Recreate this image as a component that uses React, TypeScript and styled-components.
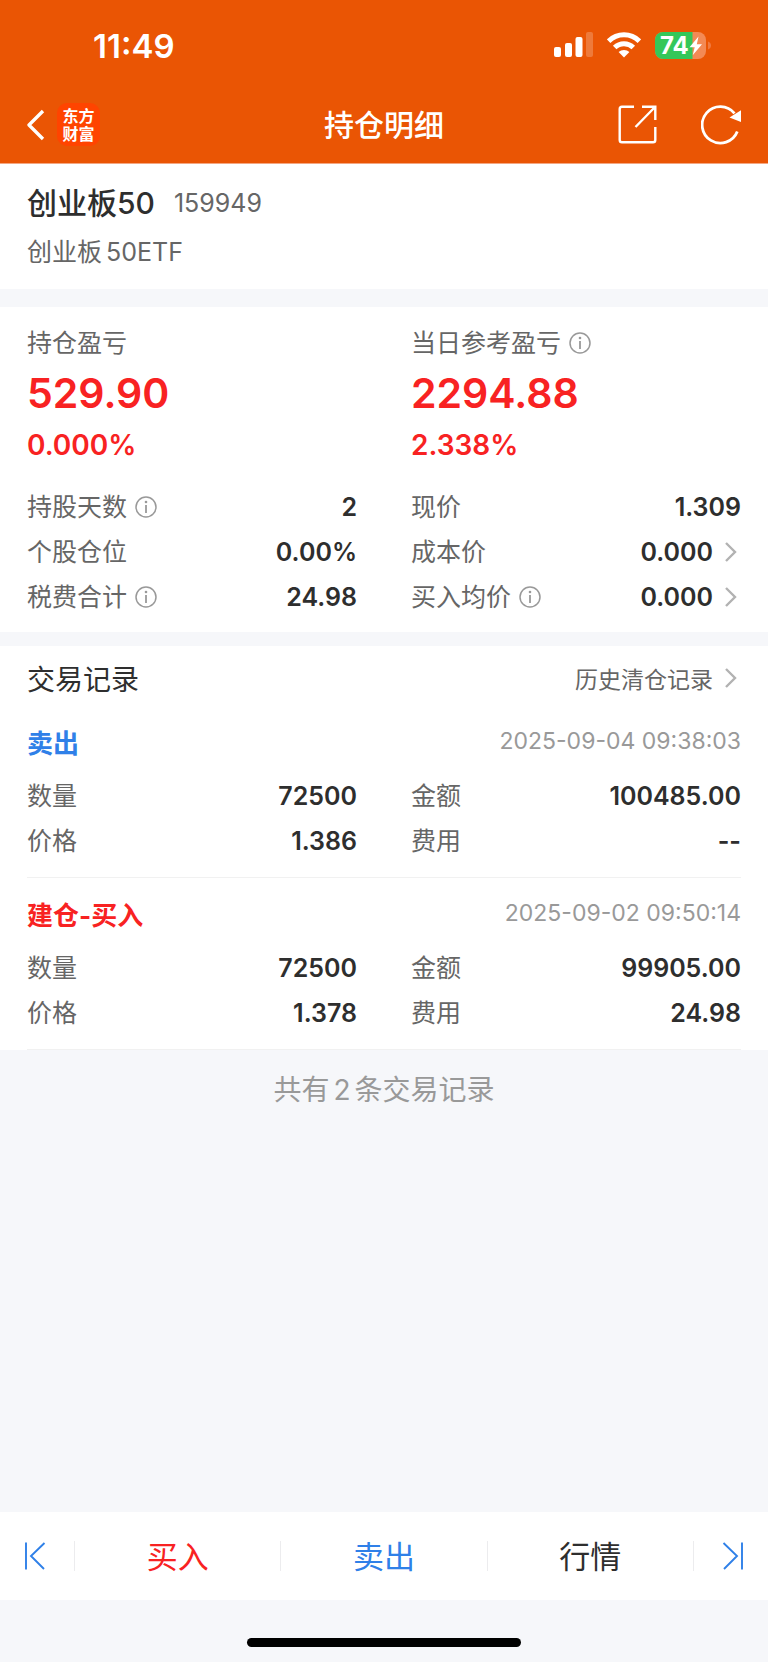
import React from "react";
import styled, { createGlobalStyle } from "styled-components";

const red = "#f82222";
const blue = "#2f80e8";
const ink = "#2e2e2e";
const muted = "#666666";
const faint = "#999999";
const canvas = "#f6f7fa";

const GlobalStyle = createGlobalStyle`
  * { box-sizing: border-box; }
  body {
    margin: 0;
    background: ${canvas};
    color: ${ink};
    font-family: Inter, "Noto Sans CJK SC", sans-serif;
    font-size: 25px;
  }
  button {
    font: inherit;
    color: inherit;
    background: none;
    border: 0;
    padding: 0;
    cursor: pointer;
  }
  h1, h2, h3, p, dl, dt, dd { margin: 0; font-weight: 400; }
  svg { display: block; flex: none; }
`;

const Page = styled.div`
  min-height: 100vh;
  display: flex;
  flex-direction: column;
`;

const Header = styled.header`
  background: #ea5504;
  color: #fff;
  border-bottom: 1px solid #f4a782;
`;

const StatusBar = styled.div`
  height: 88px;
  padding: 4px 57px 0 93px;
  display: flex;
  align-items: center;
  justify-content: space-between;
`;

const Clock = styled.span`
  font-size: 33px;
  font-weight: 600;
`;

const StatusIcons = styled.div`
  display: flex;
  align-items: center;
  gap: 14px;
  padding-bottom: 2px;
`;

const NavBar = styled.nav`
  height: 75px;
  padding: 0 27px 2px;
  display: grid;
  grid-template-columns: 1fr auto 1fr;
  align-items: center;
`;

const NavGroup = styled.div<{ $end?: boolean }>`
  display: flex;
  align-items: center;
  justify-content: ${(p) => (p.$end ? "flex-end" : "flex-start")};
  gap: ${(p) => (p.$end ? "44px" : "12px")};
`;

const Logo = styled.span`
  width: 43px;
  height: 43px;
  border-radius: 10px;
  background: #ff4400;
  display: grid;
  place-content: center;
  font-size: 16px;
  font-weight: 700;
  line-height: 18px;
  text-align: center;
`;

const NavTitle = styled.h1`
  font-size: 30px;
  line-height: 44px;
  && { font-weight: 500; }
`;

const Panel = styled.section<{ $pad: string }>`
  background: #fff;
  padding: ${(p) => p.$pad};
`;

const Divider = styled.div<{ $size: number }>`
  height: ${(p) => p.$size}px;
`;

const NameRow = styled.div`
  display: flex;
  align-items: center;
  gap: 19px;
  line-height: 44px;
`;

const StockName = styled.h2`
  font-size: 30px;
  && { font-weight: 500; }
`;

const StockCode = styled.span`
  color: ${muted};
`;

const FullName = styled.p`
  color: ${muted};
  line-height: 54px;
`;

const Columns = styled.div`
  display: grid;
  grid-template-columns: 1fr 1fr;
  column-gap: 54px;
`;

const Label = styled.span`
  color: ${muted};
  display: flex;
  align-items: center;
  gap: 8px;
  line-height: 36px;
`;

const Profit = styled.p`
  color: ${red};
  font-size: 41px;
  line-height: 64px;
  && { font-weight: 600; }
`;

const Percent = styled.p`
  color: ${red};
  font-size: 28px;
  line-height: 40px;
  margin-bottom: 19px;
  && { font-weight: 600; }
`;

const Facts = styled.dl`
  display: grid;
  grid-template-columns: 1fr 1fr;
  column-gap: 54px;
`;

const Fact = styled.div`
  height: 45px;
  display: flex;
  align-items: center;
  justify-content: space-between;
`;

const Value = styled.dd`
  && { font-weight: 600; }
`;

const ValueButton = styled.button`
  display: flex;
  align-items: center;
`;

const RecordsHead = styled.div`
  height: 54px;
  padding-bottom: 2px;
  display: flex;
  align-items: center;
  justify-content: space-between;
`;

const RecordsTitle = styled.h2`
  font-size: 28px;
`;

const HistoryLink = styled.a`
  display: flex;
  align-items: center;
  color: ${muted};
  font-size: 23px;
  text-decoration: none;
`;

const Record = styled.article`
  padding: 6px 0 14px;
  border-bottom: 1px solid #f1f1f1;
`;

const RecordHead = styled.div`
  height: 61px;
  padding-bottom: 3px;
  display: flex;
  align-items: center;
  justify-content: space-between;
`;

const Side = styled.h3<{ $color: string }>`
  color: ${(p) => p.$color};
  font-size: 26px;
  && { font-weight: 700; }
`;

const Stamp = styled.time`
  color: ${faint};
  font-size: 23px;
`;

const Summary = styled.p`
  flex: 1;
  padding-top: 15px;
  color: ${faint};
  font-size: 28px;
  line-height: 50px;
  text-align: center;
`;

const Latin = styled.span<{ $after?: boolean }>`
  margin: 0 ${(p) => (p.$after ? "4px" : "0")} 0 4px;
`;

const ActionBar = styled.nav`
  height: 88px;
  background: #fff;
  display: flex;
  align-items: center;
`;

const Step = styled.button<{ $last?: boolean }>`
  width: 74px;
  height: 88px;
  padding: ${(p) => (p.$last ? "0 0 0 4px" : "0 4px 0 0")};
  display: grid;
  place-items: center;
`;

const Action = styled.button<{ $color: string }>`
  flex: 1;
  height: 88px;
  padding-bottom: 4px;
  color: ${(p) => p.$color};
  font-size: 31px;
`;

const Rule = styled.span`
  width: 1px;
  height: 30px;
  background: #ececee;
`;

const HomeArea = styled.div`
  height: 62px;
  padding-bottom: 15px;
  display: flex;
  align-items: flex-end;
  justify-content: center;
`;

const HomeIndicator = styled.div`
  width: 274px;
  height: 9px;
  border-radius: 5px;
  background: #000;
`;

const BatteryBox = styled.div`
  position: relative;
  width: 56px;
  height: 27px;
`;

const BatteryText = styled.span`
  position: absolute;
  left: 5px;
  top: 0;
  font-size: 24px;
  font-weight: 700;
  line-height: 27px;
`;

const SignalIcon = () => (
  <svg width="39" height="26" viewBox="0 0 39 26" fill="#fff">
    <rect x="0" y="15" width="7" height="10" rx="2" />
    <rect x="11" y="11" width="7" height="14" rx="2" />
    <rect x="21.500" y="5" width="7" height="20" rx="2" />
    <rect x="32" y="0" width="7" height="25" rx="2" opacity="0.22" />
  </svg>
);

const WifiIcon = () => (
  <svg width="34" height="26" viewBox="0 0 34 26">
    <g fill="none" stroke="#fff" strokeWidth="5">
      <path d="M1.600 9.200a21.800 21.800 0 0 1 30.800 0" />
      <path d="M7.700 15.600a13.200 13.200 0 0 1 18.600 0" />
    </g>
    <path d="M17 25.500l-5.400-5.400a7.700 7.700 0 0 1 10.800 0z" fill="#fff" />
  </svg>
);

const Battery = () => (
  <BatteryBox>
    <svg width="56" height="27" viewBox="0 0 56 27">
      <defs>
        <clipPath id="cell">
          <rect width="51" height="27" rx="8" />
        </clipPath>
      </defs>
      <g clipPath="url(#cell)">
        <rect width="51" height="27" fill="#f38a55" />
        <rect width="37.500" height="27" fill="#34c759" />
      </g>
      <path d="M53 9.500c4 1.200 4 6.800 0 8z" fill="#f07a40" />
      <path d="M43.500 4.500L34.500 15.200h5.200l-2 8 9.300-11h-5.200z" fill="#fff" />
    </svg>
    <BatteryText>74</BatteryText>
  </BatteryBox>
);

const BackIcon = () => (
  <svg width="18" height="32" viewBox="0 0 18 32" fill="none" stroke="#fff" strokeWidth="3.300">
    <path d="M16 2L2 16l14 14" strokeLinejoin="round" />
  </svg>
);

const ShareIcon = () => (
  <svg width="39" height="39" viewBox="0 0 39 39" fill="none" stroke="#fff" strokeWidth="2.400">
    <path d="M16 1.700H4A2.300 2.300 0 0 0 1.700 4v31A2.300 2.300 0 0 0 4 37.300h31a2.300 2.300 0 0 0 2.300-2.300V22" />
    <path d="M24 1.700h13.300V15M37 2L17.500 22" />
  </svg>
);

const RefreshIcon = () => (
  <svg width="40" height="41" viewBox="0 0 40 41" fill="none">
    <path d="M36.300 27.500A18.200 18.200 0 1 1 33.500 9.400" stroke="#fff" strokeWidth="2.800" />
    <path d="M40 6.200v11.800L28.500 13.500z" fill="#fff" />
  </svg>
);

const InfoIcon = () => (
  <svg width="22" height="22" viewBox="0 0 22 22" role="img" aria-label="说明">
    <circle cx="11" cy="11" r="10" fill="none" stroke="#999" strokeWidth="1.500" />
    <circle cx="11" cy="6" r="1.300" fill="#999" />
    <path d="M11 9v8" stroke="#999" strokeWidth="1.800" />
  </svg>
);

const Chevron = () => (
  <svg width="28" height="20" viewBox="0 0 28 20" fill="none" stroke="#b2b2b2" strokeWidth="2.400">
    <path d="M13 1l9 9-9 9" />
  </svg>
);

const FirstIcon = () => (
  <svg width="22" height="28" viewBox="0 0 22 28" fill="none" stroke={blue} strokeWidth="1.900">
    <path d="M2 0.500v27M20.500 1L7 14l13 13" />
  </svg>
);

const LastIcon = () => (
  <svg width="22" height="28" viewBox="0 0 22 28" fill="none" stroke={blue} strokeWidth="1.900">
    <path d="M20 0.500v27M1.500 1L15 14 2 27" />
  </svg>
);

type FactData = { label: string; value: string; info?: boolean; link?: boolean };

const position: FactData[] = [
  { label: "持股天数", value: "2", info: true },
  { label: "现价", value: "1.309" },
  { label: "个股仓位", value: "0.00%" },
  { label: "成本价", value: "0.000", link: true },
  { label: "税费合计", value: "24.98", info: true },
  { label: "买入均价", value: "0.000", info: true, link: true },
];

const records = [
  {
    side: "卖出",
    color: blue,
    time: "2025-09-04 09:38:03",
    facts: [
      { label: "数量", value: "72500" },
      { label: "金额", value: "100485.00" },
      { label: "价格", value: "1.386" },
      { label: "费用", value: "--" },
    ],
  },
  {
    side: "建仓-买入",
    color: red,
    time: "2025-09-02 09:50:14",
    facts: [
      { label: "数量", value: "72500" },
      { label: "金额", value: "99905.00" },
      { label: "价格", value: "1.378" },
      { label: "费用", value: "24.98" },
    ],
  },
];

const FactList = ({ items }: { items: FactData[] }) => (
  <Facts>
    {items.map((f) => (
      <Fact key={f.label}>
        <Label as="dt">
          {f.label}
          {f.info && <InfoIcon />}
        </Label>
        <Value>
          {f.link ? (
            <ValueButton>
              {f.value}
              <Chevron />
            </ValueButton>
          ) : (
            f.value
          )}
        </Value>
      </Fact>
    ))}
  </Facts>
);

export default function App() {
  return (
    <Page>
      <GlobalStyle />
      <Header>
        <StatusBar>
          <Clock>11:49</Clock>
          <StatusIcons>
            <SignalIcon />
            <WifiIcon />
            <Battery />
          </StatusIcons>
        </StatusBar>
        <NavBar>
          <NavGroup>
            <button aria-label="返回">
              <BackIcon />
            </button>
            <Logo>
              <span>东方</span>
              <span>财富</span>
            </Logo>
          </NavGroup>
          <NavTitle>持仓明细</NavTitle>
          <NavGroup $end>
            <button aria-label="分享">
              <ShareIcon />
            </button>
            <button aria-label="刷新">
              <RefreshIcon />
            </button>
          </NavGroup>
        </NavBar>
      </Header>

      <main>
        <Panel $pad="17px 27px 10px">
          <NameRow>
            <StockName>创业板50</StockName>
            <StockCode>159949</StockCode>
          </NameRow>
          <FullName>
            创业板<Latin>50ETF</Latin>
          </FullName>
        </Panel>
        <Divider $size={18} />
        <Panel $pad="18px 27px 13px">
          <Columns>
            <div>
              <Label>持仓盈亏</Label>
              <Profit>529.90</Profit>
              <Percent>0.000%</Percent>
            </div>
            <div>
              <Label>
                当日参考盈亏
                <InfoIcon />
              </Label>
              <Profit>2294.88</Profit>
              <Percent>2.338%</Percent>
            </div>
          </Columns>
          <FactList items={position} />
        </Panel>
        <Divider $size={14} />
        <Panel $pad="6px 27px 0">
          <RecordsHead>
            <RecordsTitle>交易记录</RecordsTitle>
            <HistoryLink href="#history">
              历史清仓记录
              <Chevron />
            </HistoryLink>
          </RecordsHead>
          {records.map((r) => (
            <Record key={r.time}>
              <RecordHead>
                <Side $color={r.color}>{r.side}</Side>
                <Stamp>{r.time}</Stamp>
              </RecordHead>
              <FactList items={r.facts} />
            </Record>
          ))}
        </Panel>
      </main>
      <Summary>
        共有<Latin $after>2</Latin>条交易记录
      </Summary>

      <ActionBar>
        <Step aria-label="上一只">
          <FirstIcon />
        </Step>
        <Rule />
        <Action $color={red}>买入</Action>
        <Rule />
        <Action $color={blue}>卖出</Action>
        <Rule />
        <Action $color={ink}>行情</Action>
        <Rule />
        <Step $last aria-label="下一只">
          <LastIcon />
        </Step>
      </ActionBar>
      <HomeArea>
        <HomeIndicator />
      </HomeArea>
    </Page>
  );
}
